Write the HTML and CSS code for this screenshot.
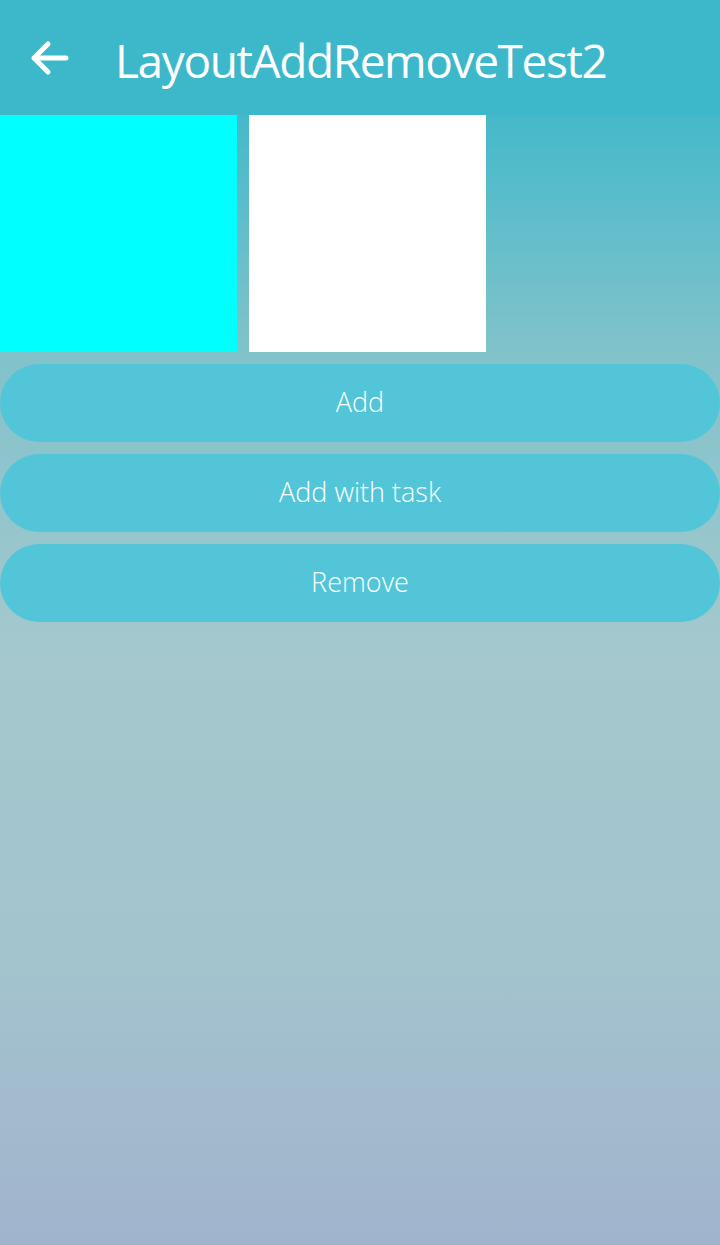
FILE: index.html
```html
<!DOCTYPE html>
<html>
<head>
<meta charset="utf-8">
<link rel="stylesheet" href="styles.css">
</head>
<body>
<header class="appbar">
  <svg class="back" width="40" height="36" viewBox="0 0 40 36">
    <path d="M36 18 H4 M18 4 L4 18 L18 32" fill="none" stroke="#fff" stroke-width="5" stroke-linecap="round" stroke-linejoin="round"/>
  </svg>
  <h1 class="title">LayoutAddRemoveTest2</h1>
</header>
<main class="content">
  <div class="boxes">
    <div class="box box-cyan"></div>
    <div class="box box-white"></div>
  </div>
  <button class="pill">Add</button>
  <button class="pill">Add with task</button>
  <button class="pill">Remove</button>
</main>
</body>
</html>
```
FILE: styles.css
```css
html, body {
  margin: 0;
  padding: 0;
  width: 720px;
  height: 1245px;
  overflow: hidden;
}
body {
  font-family: "Open Sans", "Noto Sans", sans-serif;
  background: linear-gradient(to bottom, #3db8cb 0px, #45b9ca 115px, #80c2cb 345px, #a3c8cd 640px, #a3c4cd 950px, #a1b4cd 1245px);
}
.appbar {
  height: 115px;
  background: #3db8cb;
  display: flex;
  align-items: center;
  box-sizing: border-box;
  padding-left: 30px;
}
.back {
  display: block;
  margin-right: 45px;
}
.title {
  margin: 0;
  color: #fff;
  font-family: "Open Sans", "Noto Sans", sans-serif;
  font-weight: 400;
  font-size: 46px;
  letter-spacing: -1.4px;
  line-height: 1;
  margin-top: 5px;
}
.content {
  display: flex;
  flex-direction: column;
  gap: 12px;
}
.boxes {
  display: flex;
  gap: 12px;
}
.box {
  width: 237px;
  height: 237px;
}
.box-cyan { background: #00ffff; }
.box-white { background: #ffffff; }
.pill {
  height: 78px;
  border: none;
  border-radius: 39px;
  background: #52c6d8;
  color: #fff;
  font-family: "Open Sans", "Noto Sans", sans-serif;
  font-weight: 300;
  font-size: 27px;
  padding: 0 0 4px 0;
  width: 100%;
}
```
